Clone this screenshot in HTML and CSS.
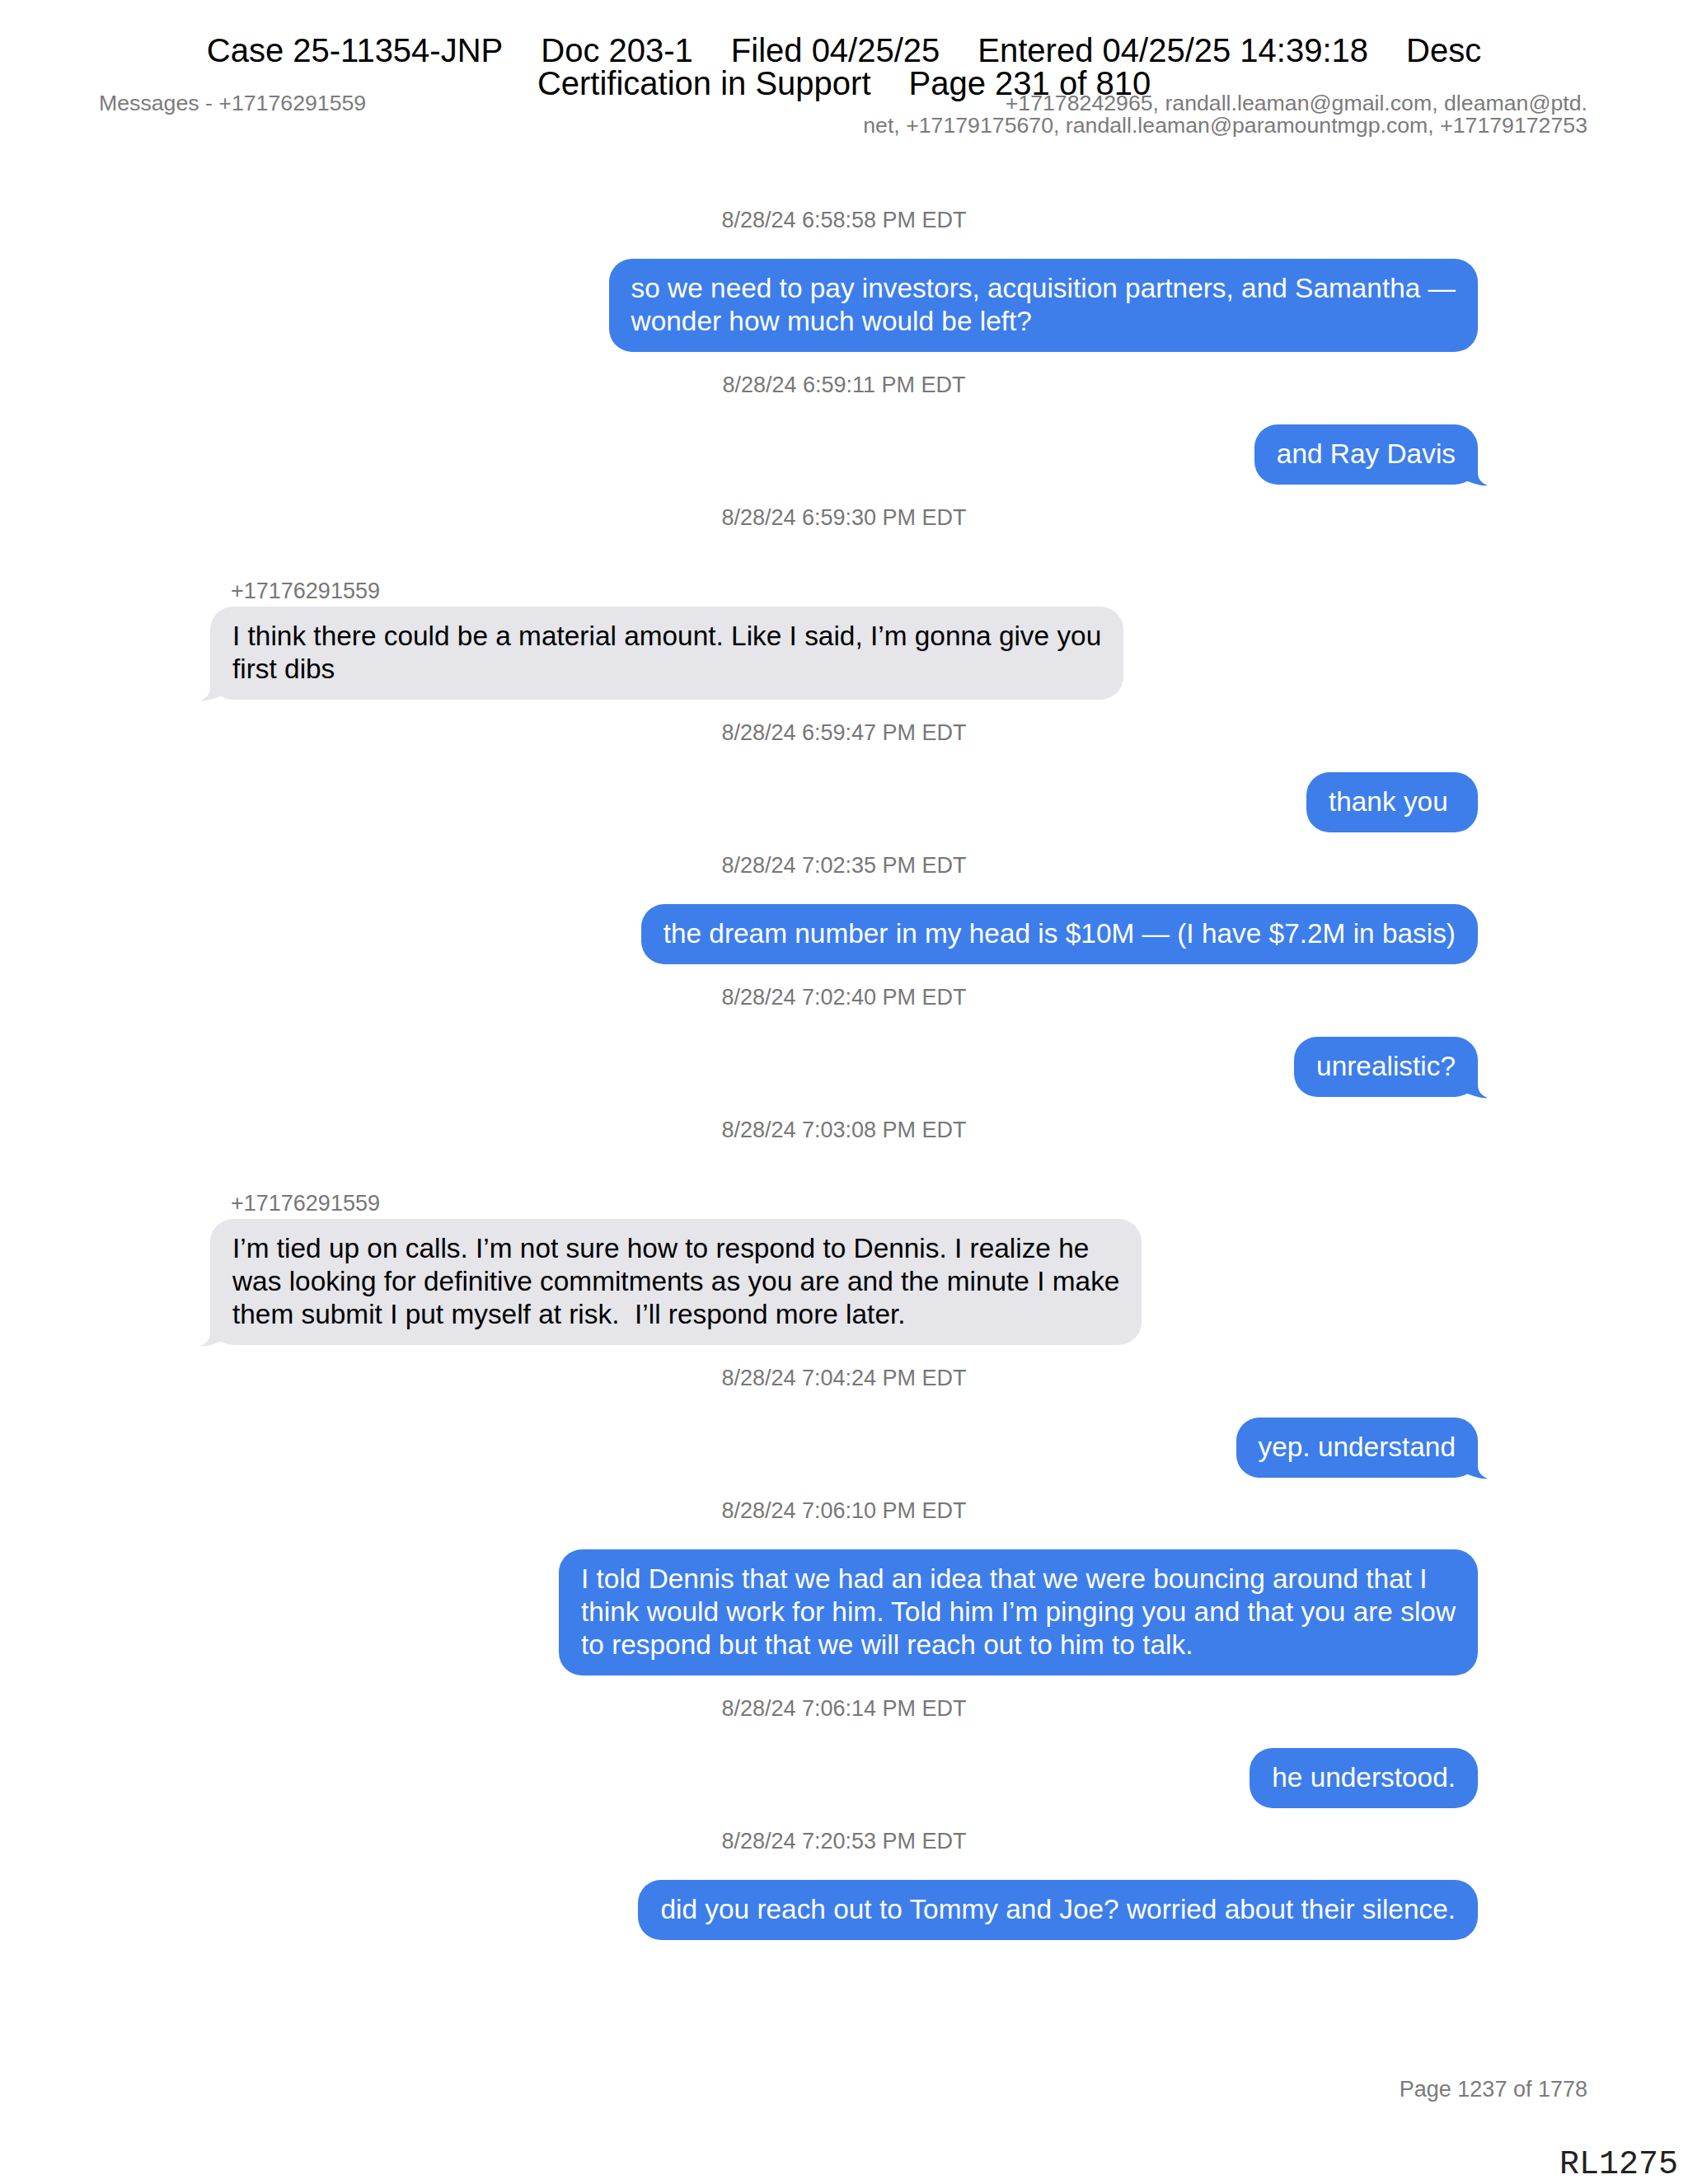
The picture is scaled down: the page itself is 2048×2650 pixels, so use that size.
FILE: index.html
```html
<!DOCTYPE html>
<html lang="en">
<head>
<meta charset="utf-8">
<title>Messages - +17176291559</title>
<link rel="stylesheet" href="styles.css">
</head>
<body>
<div class="page">
  <div class="stamp">
    <div class="stamp-line"><span>Case 25-11354-JNP</span><span>Doc 203-1</span><span>Filed 04/25/25</span><span>Entered 04/25/25 14:39:18</span><span>Desc</span></div>
    <div class="stamp-line"><span>Certification in Support</span><span>Page 231 of 810</span></div>
  </div>

  <header class="msg-header">
    <div class="msg-title">Messages - +17176291559</div>
    <div class="msg-parts">
      <span class="part-line">+17178242965, randall.leaman@gmail.com, dleaman@ptd.</span>
      <span class="part-line">net, +17179175670, randall.leaman@paramountmgp.com, +17179172753</span>
    </div>
  </header>

  <main class="conv">
    <div class="ts">8/28/24 6:58:58 PM EDT</div>
    <div class="bubble out">so we need to pay investors, acquisition partners, and Samantha —<br>wonder how much would be left?</div>

    <div class="ts">8/28/24 6:59:11 PM EDT</div>
    <div class="bubble out tail">and Ray Davis<svg class="tail-svg" viewBox="0 0 40 40" width="40" height="40"><path d="M0 10 L26 10 L26 24 C26 32 32 37 38 39 C32 40 24 38 14 34 L0 34 Z"/></svg></div>

    <div class="ts">8/28/24 6:59:30 PM EDT</div>
    <div class="sender">+17176291559</div>
    <div class="bubble in tail">I think there could be a material amount. Like I said, I’m gonna give you<br>first dibs<svg class="tail-svg" viewBox="0 0 40 40" width="40" height="40"><path d="M0 10 L26 10 L26 24 C26 32 32 37 38 39 C32 40 24 38 14 34 L0 34 Z"/></svg></div>

    <div class="ts">8/28/24 6:59:47 PM EDT</div>
    <div class="bubble out">thank you&nbsp;</div>

    <div class="ts">8/28/24 7:02:35 PM EDT</div>
    <div class="bubble out">the dream number in my head is $10M — (I have $7.2M in basis)</div>

    <div class="ts">8/28/24 7:02:40 PM EDT</div>
    <div class="bubble out tail">unrealistic?<svg class="tail-svg" viewBox="0 0 40 40" width="40" height="40"><path d="M0 10 L26 10 L26 24 C26 32 32 37 38 39 C32 40 24 38 14 34 L0 34 Z"/></svg></div>

    <div class="ts">8/28/24 7:03:08 PM EDT</div>
    <div class="sender">+17176291559</div>
    <div class="bubble in tail">I’m tied up on calls. I’m not sure how to respond to Dennis. I realize he<br>was looking for definitive commitments as you are and the minute I make<br>them submit I put myself at risk.&nbsp; I’ll respond more later.<svg class="tail-svg" viewBox="0 0 40 40" width="40" height="40"><path d="M0 10 L26 10 L26 24 C26 32 32 37 38 39 C32 40 24 38 14 34 L0 34 Z"/></svg></div>

    <div class="ts">8/28/24 7:04:24 PM EDT</div>
    <div class="bubble out tail">yep. understand<svg class="tail-svg" viewBox="0 0 40 40" width="40" height="40"><path d="M0 10 L26 10 L26 24 C26 32 32 37 38 39 C32 40 24 38 14 34 L0 34 Z"/></svg></div>

    <div class="ts">8/28/24 7:06:10 PM EDT</div>
    <div class="bubble out">I told Dennis that we had an idea that we were bouncing around that I<br>think would work for him. Told him I’m pinging you and that you are slow<br>to respond but that we will reach out to him to talk.</div>

    <div class="ts">8/28/24 7:06:14 PM EDT</div>
    <div class="bubble out">he understood.</div>

    <div class="ts">8/28/24 7:20:53 PM EDT</div>
    <div class="bubble out">did you reach out to Tommy and Joe? worried about their silence.</div>
  </main>

  <footer class="page-footer">
    <div class="page-num">Page 1237 of 1778</div>
    <div class="bates">RL1275</div>
  </footer>
</div>
</body>
</html>
```

FILE: styles.css
```css
* { box-sizing: border-box; }

html, body {
  margin: 0;
  padding: 0;
  background: #ffffff;
}

body {
  font-family: "Liberation Sans", Arial, sans-serif;
}

.page {
  position: relative;
  width: 2048px;
  height: 2650px;
  display: flex;
  flex-direction: column;
  overflow: hidden;
}

/* Court filing stamp laid over the page */
.stamp {
  position: absolute;
  top: 41px;
  left: 0;
  right: 0;
  font-size: 40px;
  line-height: 40px;
  color: #000;
  z-index: 2;
}

.stamp-line {
  display: flex;
  justify-content: center;
  gap: 46px;
  white-space: nowrap;
}

/* Messages export header */
.msg-header {
  display: flex;
  justify-content: space-between;
  align-items: flex-start;
  padding: 111.5px 122px 0 120px;
  font-size: 26.7px;
  line-height: 27px;
  color: #7b7b7b;
}

.msg-parts {
  display: flex;
  flex-direction: column;
  align-items: flex-end;
  text-align: right;
}

.part-line { display: block; white-space: nowrap; }

/* Conversation */
.conv {
  display: flex;
  flex-direction: column;
  padding: 0 255px;
  margin-top: 61px;
}

.ts {
  font-size: 27px;
  line-height: 32px;
  color: #777777;
  text-align: center;
  margin: 24px 0 31.5px;
}

.sender {
  font-size: 27px;
  line-height: 32px;
  color: #777777;
  padding-left: 25px;
  margin: 26px 0 3px;
}

.bubble {
  position: relative;
  padding: 16px 27px 17px;
  border-radius: 28px;
  font-size: 33.4px;
  line-height: 40px;
  white-space: nowrap;
}

.bubble.out {
  align-self: flex-end;
  background: #3d7eea;
  color: #ffffff;
}

.bubble.in {
  align-self: flex-start;
  background: #e5e5ea;
  color: #000000;
}

.tail-svg {
  position: absolute;
  bottom: -2px;
  width: 40px;
  height: 40px;
}

.bubble.out .tail-svg {
  right: -14px;
  fill: #3d7eea;
}

.bubble.in .tail-svg {
  left: -14px;
  fill: #e5e5ea;
  transform: scaleX(-1);
}

/* Footer */
.page-footer {
  margin-top: auto;
  display: flex;
  flex-direction: column;
  align-items: flex-end;
  padding-bottom: 3px;
}

.page-num {
  font-size: 27px;
  line-height: 27px;
  color: #7b7b7b;
  margin-right: 122px;
}

.bates {
  font-family: "Liberation Mono", "Courier New", monospace;
  font-size: 40px;
  line-height: 40px;
  color: #222222;
  margin-top: 58px;
  margin-right: 12px;
}
```
